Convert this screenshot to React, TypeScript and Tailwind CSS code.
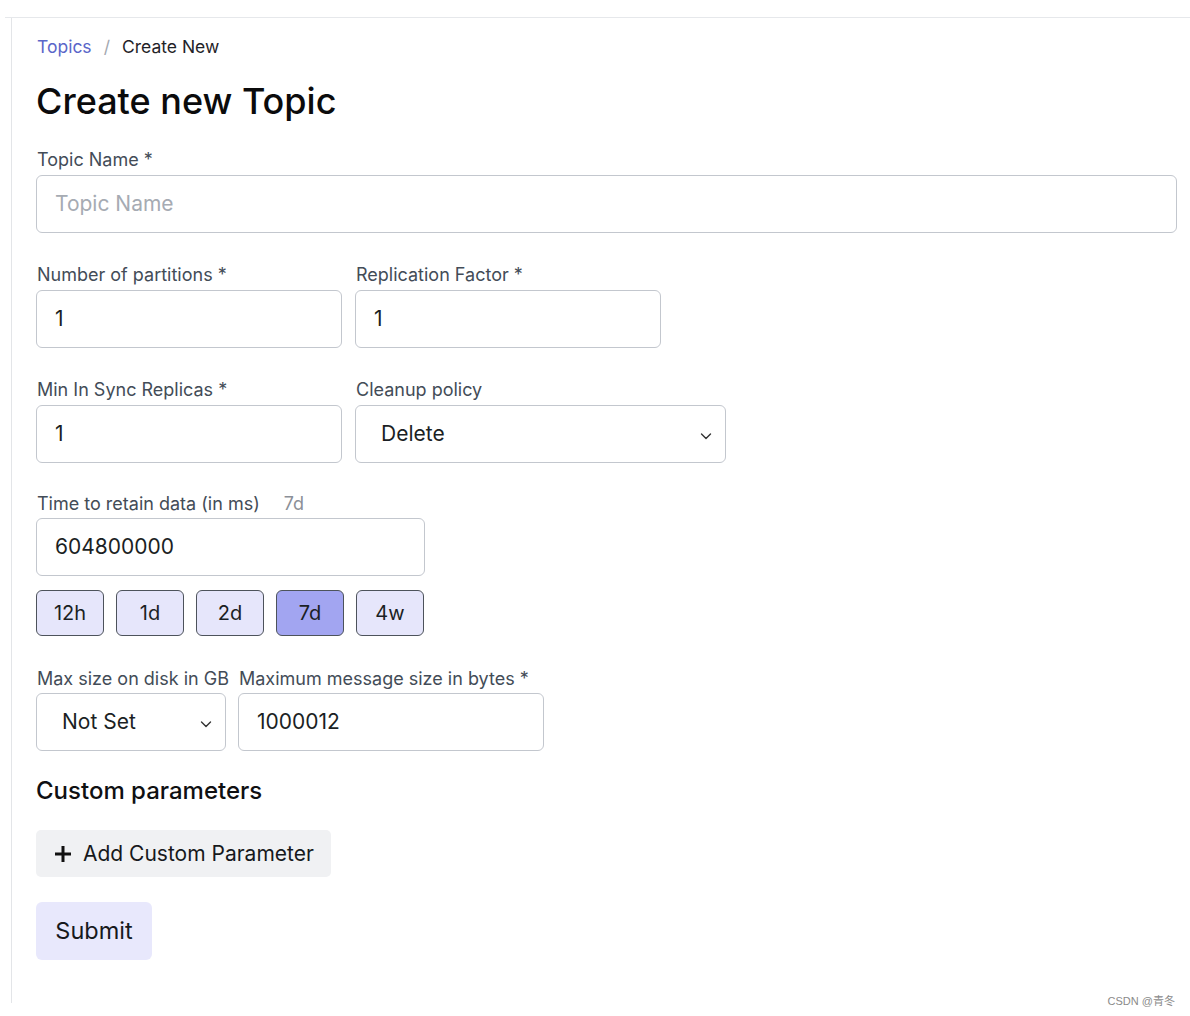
import React from "react";

const font = { fontFamily: "Inter, 'Noto Sans', 'Noto Sans CJK SC', sans-serif" };

function Label({ children, extra, mb }: { children: React.ReactNode; extra?: string; mb: string }) {
  return (
    <div
      className={`flex h-[22px] items-center whitespace-nowrap pl-[1px] pt-[2px] text-[18px] leading-[22px] text-[#434c57] ${mb}`}
    >
      <span>{children}</span>
      {extra && <span className="ml-[24px] text-[#8b9098]">{extra}</span>}
    </div>
  );
}

function TextInput({ value, placeholder }: { value?: string; placeholder?: string }) {
  return (
    <div
      className={`flex h-[58px] w-full items-center rounded-[6px] border border-[#c3c7ce] bg-white pl-[18px] text-[21px] ${
        value ? "text-[#1b1f24]" : "text-[#a6abb3]"
      }`}
    >
      {value ?? placeholder}
    </div>
  );
}

function Select({ value }: { value: string }) {
  return (
    <div className="flex h-[58px] w-full items-center justify-between rounded-[6px] border border-[#c3c7ce] bg-white pl-[25px] pr-[12px] text-[21px] text-[#1b1f24]">
      <span>{value}</span>
      <svg width="14" height="14" viewBox="0 0 14 14" fill="none" className="mt-[4px]">
        <path d="M2.5 5 L7 9.5 L11.5 5" stroke="#333" strokeWidth="1.4" strokeLinecap="round" strokeLinejoin="round" />
      </svg>
    </div>
  );
}

function Field({
  label,
  extra,
  mb = "mb-[5px]",
  w,
  children,
}: {
  label: string;
  extra?: string;
  mb?: string;
  w: string;
  children: React.ReactNode;
}) {
  return (
    <div className={`flex flex-col ${w}`}>
      <Label extra={extra} mb={mb}>
        {label}
      </Label>
      {children}
    </div>
  );
}

export default function App() {
  const times = ["12h", "1d", "2d", "7d", "4w"];
  return (
    <div className="relative h-[1016px] w-[1190px] overflow-hidden bg-white" style={font}>
      <div className="ml-[5px] mt-[17px] border-t border-[#e6e8eb]">
        <div className="ml-[6px] h-[985px] border-l border-[#e3e5e8] pl-[24px] pr-[13px] pt-[16px]">
          <div className="flex h-[24px] items-center pt-[2px] text-[17.5px] leading-[24px]">
            <span className="ml-[1px] text-[#5a66c9]">Topics</span>
            <span className="mx-[12px] text-[#a3a8b0]">/</span>
            <span className="text-[#1f2328]">Create New</span>
          </div>
          <h1 className="mt-[21px] h-[44px] text-[36px] font-medium leading-[44px] text-[#0b0b0c]">
            Create new Topic
          </h1>

          <div className="mt-[25px]">
            <Field label="Topic Name *" w="w-[1141px]">
              <TextInput placeholder="Topic Name" />
            </Field>
          </div>

          <div className="mt-[30px] flex gap-[13px]">
            <Field label="Number of partitions *" w="w-[306px]">
              <TextInput value="1" />
            </Field>
            <Field label="Replication Factor *" w="w-[306px]">
              <TextInput value="1" />
            </Field>
          </div>

          <div className="mt-[30px] flex gap-[13px]">
            <Field label="Min In Sync Replicas *" w="w-[306px]">
              <TextInput value="1" />
            </Field>
            <Field label="Cleanup policy" w="w-[371px]">
              <Select value="Delete" />
            </Field>
          </div>

          <div className="mt-[29px]">
            <Field label="Time to retain data (in ms)" extra="7d" mb="mb-[4px]" w="w-[389px]">
              <TextInput value="604800000" />
            </Field>
            <div className="mt-[14px] flex gap-[12px]">
              {times.map((t) => (
                <button
                  key={t}
                  className={`h-[46px] w-[68px] rounded-[6px] border border-[#4d535b] text-[20px] text-[#1b1f24] ${
                    t === "7d" ? "bg-[#a2a5f1]" : "bg-[#e6e6fb]"
                  }`}
                >
                  {t}
                </button>
              ))}
            </div>
          </div>

          <div className="mt-[31px] flex gap-[12px]">
            <Field label="Max size on disk in GB" mb="mb-[4px]" w="w-[190px]">
              <Select value="Not Set" />
            </Field>
            <Field label="Maximum message size in bytes *" mb="mb-[4px]" w="w-[306px]">
              <TextInput value="1000012" />
            </Field>
          </div>

          <h2 className="mt-[25px] h-[30px] text-[24px] font-medium leading-[30px] text-[#0f1012]">
            Custom parameters
          </h2>

          <button className="mt-[24px] flex h-[47px] items-center gap-[10px] rounded-[5px] bg-[#f0f1f3] pl-[17px] pr-[17px] text-[21px] text-[#17191c]">
            <svg width="20" height="20" viewBox="0 0 20 20">
              <path d="M10 2 V18 M2 10 H18" stroke="#111" strokeWidth="3" />
            </svg>
            <span>Add Custom Parameter</span>
          </button>

          <button className="mt-[25px] flex h-[58px] w-[116px] items-center justify-center rounded-[6px] bg-[#e8e8fc] text-[23.5px] text-[#17191c]">
            Submit
          </button>
        </div>
      </div>
      <div
        className="absolute bottom-[7px] right-[15px] text-[11px] text-[#8a8a8a]"
        style={{ fontFamily: "'Liberation Sans', 'Noto Sans CJK SC', sans-serif" }}
      >
        CSDN @青冬
      </div>
    </div>
  );
}
